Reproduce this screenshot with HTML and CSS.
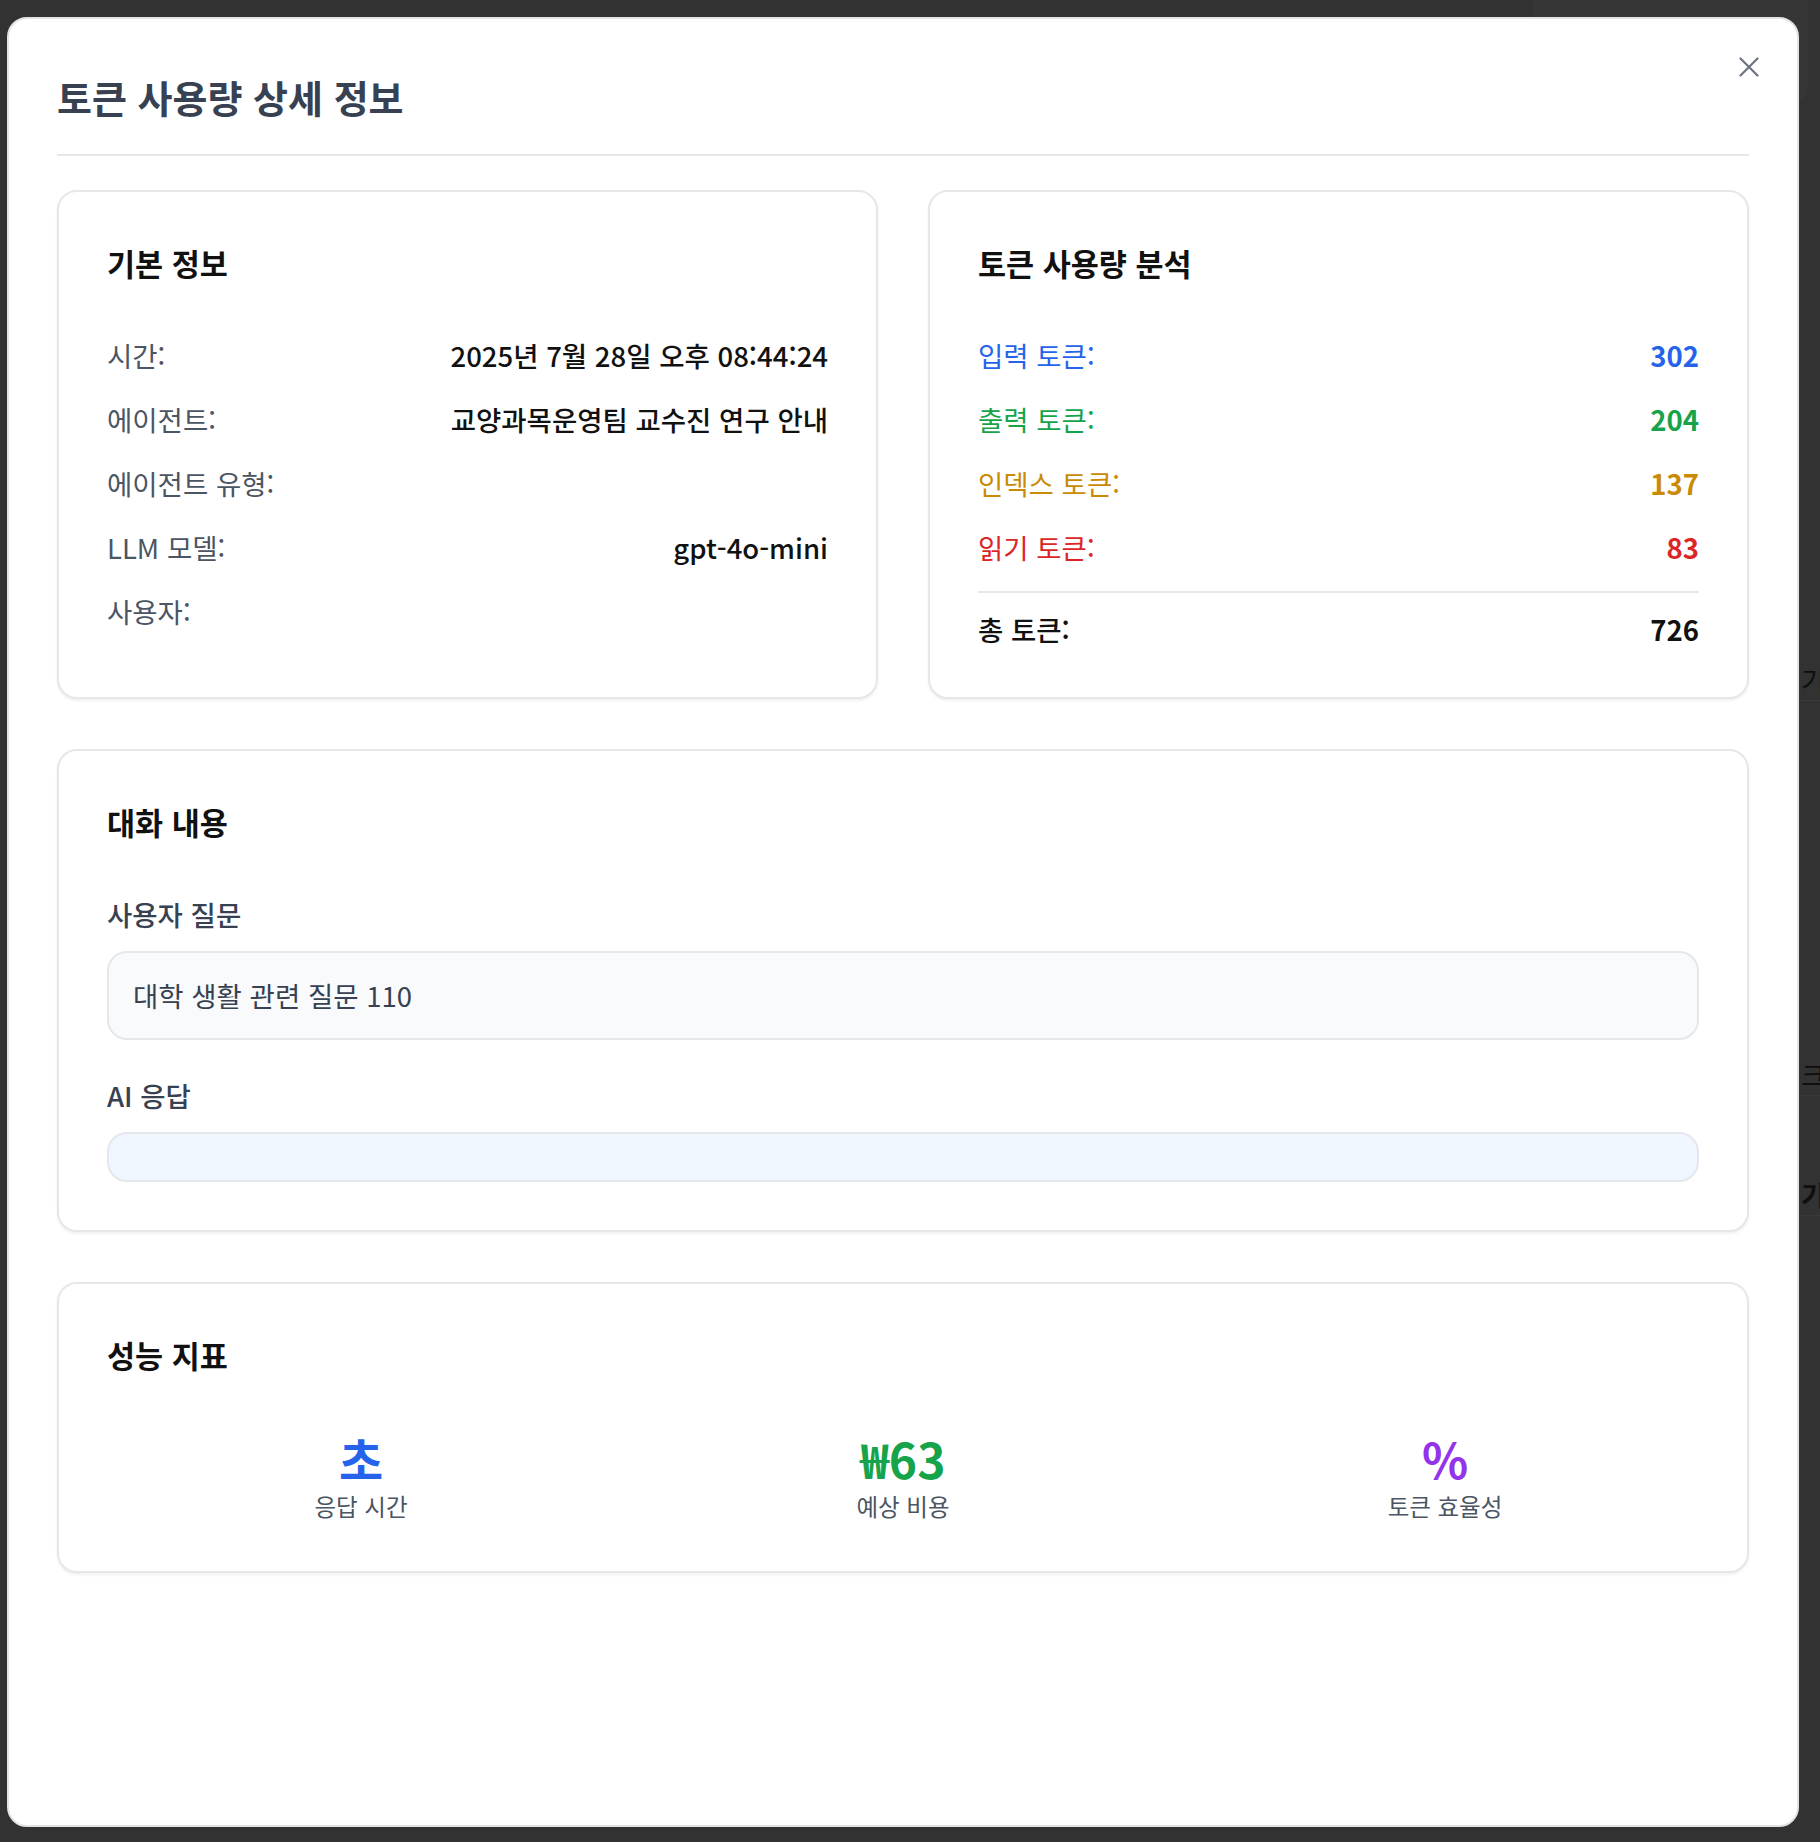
FILE: index.html
```html
<!DOCTYPE html>
<html lang="ko">
<head>
<meta charset="utf-8">
<title>토큰 사용량 상세 정보</title>
<link rel="stylesheet" href="styles.css">
</head>
<body>
  <div class="ghost-page" aria-hidden="true">
    <div class="ghost-panel"></div>
    <div class="ghost-row ghost-r1"><span>기록</span></div>
    <div class="ghost-row ghost-r2"><span>크기</span></div>
    <div class="ghost-row ghost-r3"><span>기록</span></div>
  </div>

  <div class="modal" role="dialog" aria-modal="true">
    <button class="close-btn" aria-label="닫기">
      <svg width="20" height="20" viewBox="0 0 20 20" fill="none">
        <path d="M1.5 1.5 L18.5 18.5 M18.5 1.5 L1.5 18.5" stroke="#6b7280" stroke-width="2.2" stroke-linecap="round"/>
      </svg>
    </button>

    <header class="modal-header">
      <h2 class="modal-title">토큰 사용량 상세 정보</h2>
    </header>

    <div class="modal-body">
      <div class="grid-two">
        <section class="card">
          <h3 class="card-title">기본 정보</h3>
          <div class="rows">
            <div class="row"><span class="label">시간:</span><span class="value">2025년 7월 28일 오후 08:44:24</span></div>
            <div class="row"><span class="label">에이전트:</span><span class="value">교양과목운영팀 교수진 연구 안내</span></div>
            <div class="row"><span class="label">에이전트 유형:</span><span class="value"></span></div>
            <div class="row"><span class="label">LLM 모델:</span><span class="value">gpt-4o-mini</span></div>
            <div class="row"><span class="label">사용자:</span><span class="value"></span></div>
          </div>
        </section>

        <section class="card">
          <h3 class="card-title">토큰 사용량 분석</h3>
          <div class="rows">
            <div class="row c-blue"><span>입력 토큰:</span><span class="num">302</span></div>
            <div class="row c-green"><span>출력 토큰:</span><span class="num">204</span></div>
            <div class="row c-amber"><span>인덱스 토큰:</span><span class="num">137</span></div>
            <div class="row c-red"><span>읽기 토큰:</span><span class="num">83</span></div>
            <div class="row total-row"><span class="total-label">총 토큰:</span><span class="num">726</span></div>
          </div>
        </section>
      </div>

      <section class="card">
        <h3 class="card-title">대화 내용</h3>
        <div class="qa-block">
          <h4 class="sub-title">사용자 질문</h4>
          <div class="msg-box msg-user">대학 생활 관련 질문 110</div>
        </div>
        <div class="qa-block">
          <h4 class="sub-title">AI 응답</h4>
          <div class="msg-box msg-ai"></div>
        </div>
      </section>

      <section class="card">
        <h3 class="card-title">성능 지표</h3>
        <div class="metrics">
          <div class="metric">
            <div class="metric-value m-blue">초</div>
            <div class="metric-label">응답 시간</div>
          </div>
          <div class="metric">
            <div class="metric-value m-green">₩63</div>
            <div class="metric-label">예상 비용</div>
          </div>
          <div class="metric">
            <div class="metric-value m-purple">%</div>
            <div class="metric-label">토큰 효율성</div>
          </div>
        </div>
      </section>
    </div>
  </div>
</body>
</html>
```

FILE: styles.css
```css
* {
  box-sizing: border-box;
}

html, body {
  margin: 0;
  padding: 0;
}

body {
  width: 1820px;
  height: 1842px;
  overflow: hidden;
  position: relative;
  background: #323232;
  font-family: "Noto Sans CJK KR", "Noto Sans", sans-serif;
  color: #111827;
}

/* faint page behind the overlay */
.ghost-page {
  position: absolute;
  inset: 0;
  z-index: 0;
  overflow: hidden;
}

.ghost-panel {
  position: absolute;
  left: 1533px;
  top: 0;
  width: 275px;
  height: 103px;
  border-radius: 0 0 16px 16px;
  background: #363636;
}

.ghost-row {
  position: absolute;
  left: 1801px;
  width: 19px;
  overflow: hidden;
  white-space: nowrap;
  font-size: 27px;
  line-height: 40px;
  color: #0f0f0f;
  border-bottom: 1px solid #3a3a3a;
}

.ghost-r1 { top: 660px; }
.ghost-r2 { top: 1055px; }
.ghost-r3 { top: 1175px; font-weight: 700; }

/* modal */
.modal {
  position: absolute;
  left: 7px;
  top: 17px;
  width: 1792px;
  height: 1810px;
  z-index: 1;
  background: #ffffff;
  border: 2px solid #e3e3e3;
  border-radius: 20px;
  padding: 0 48px;
}

.close-btn {
  position: absolute;
  right: 38px;
  top: 38px;
  width: 20px;
  height: 20px;
  padding: 0;
  border: 0;
  background: transparent;
  display: flex;
}

.modal-header {
  padding-top: 54px;
  padding-bottom: 33px;
  border-bottom: 2px solid #e5e7eb;
  margin-bottom: 34px;
}

.modal-title {
  margin: 0;
  font-size: 38px;
  line-height: 48px;
  font-weight: 700;
  color: #374151;
}

.modal-body {
  display: flex;
  flex-direction: column;
  gap: 50px;
}

.grid-two {
  display: grid;
  grid-template-columns: 1fr 1fr;
  gap: 50px;
}

.card {
  border: 2px solid #e5e7eb;
  border-radius: 20px;
  padding: 48px;
  background: #ffffff;
  box-shadow: 0 2px 3px rgba(0, 0, 0, 0.06);
}

.card-title {
  margin: 0 0 49px;
  font-size: 30.5px;
  line-height: 46px;
  font-weight: 700;
  color: #111111;
}

.rows {
  display: flex;
  flex-direction: column;
  gap: 24px;
}

.row {
  display: flex;
  justify-content: space-between;
  align-items: center;
  font-size: 27.5px;
  line-height: 40px;
}

.label {
  color: #4b5563;
}

.value {
  color: #111111;
  font-weight: 500;
}

.num {
  font-weight: 700;
}

.c-blue { color: #2563eb; }
.c-green { color: #16a34a; }
.c-amber { color: #ca8a04; }
.c-red { color: #dc2626; }

.total-row {
  border-top: 2px solid #e5e7eb;
  padding-top: 16px;
  color: #111111;
}

.total-label {
  font-weight: 500;
}

.qa-block + .qa-block {
  margin-top: 35px;
}

.sub-title {
  margin: 0 0 17px;
  font-size: 27.5px;
  line-height: 40px;
  font-weight: 500;
  color: #374151;
}

.msg-box {
  border: 2px solid #e5e7eb;
  border-radius: 20px;
  padding: 23px 24px;
  font-size: 27.5px;
  line-height: 39px;
  color: #374151;
}

.msg-user {
  background: #f9fafb;
}

.msg-ai {
  background: #eff6ff;
  min-height: 50px;
}

.metrics {
  display: grid;
  grid-template-columns: repeat(3, 1fr);
  gap: 34px;
  padding-top: 7px;
}

.metric {
  text-align: center;
}

.metric-value {
  font-size: 48px;
  line-height: 48px;
  font-weight: 700;
}

.m-blue { color: #2563eb; }
.m-green { color: #16a34a; }
.m-purple { color: #9333ea; }

.metric-label {
  margin-top: 7px;
  font-size: 23.5px;
  line-height: 34px;
  color: #4b5563;
}
```
